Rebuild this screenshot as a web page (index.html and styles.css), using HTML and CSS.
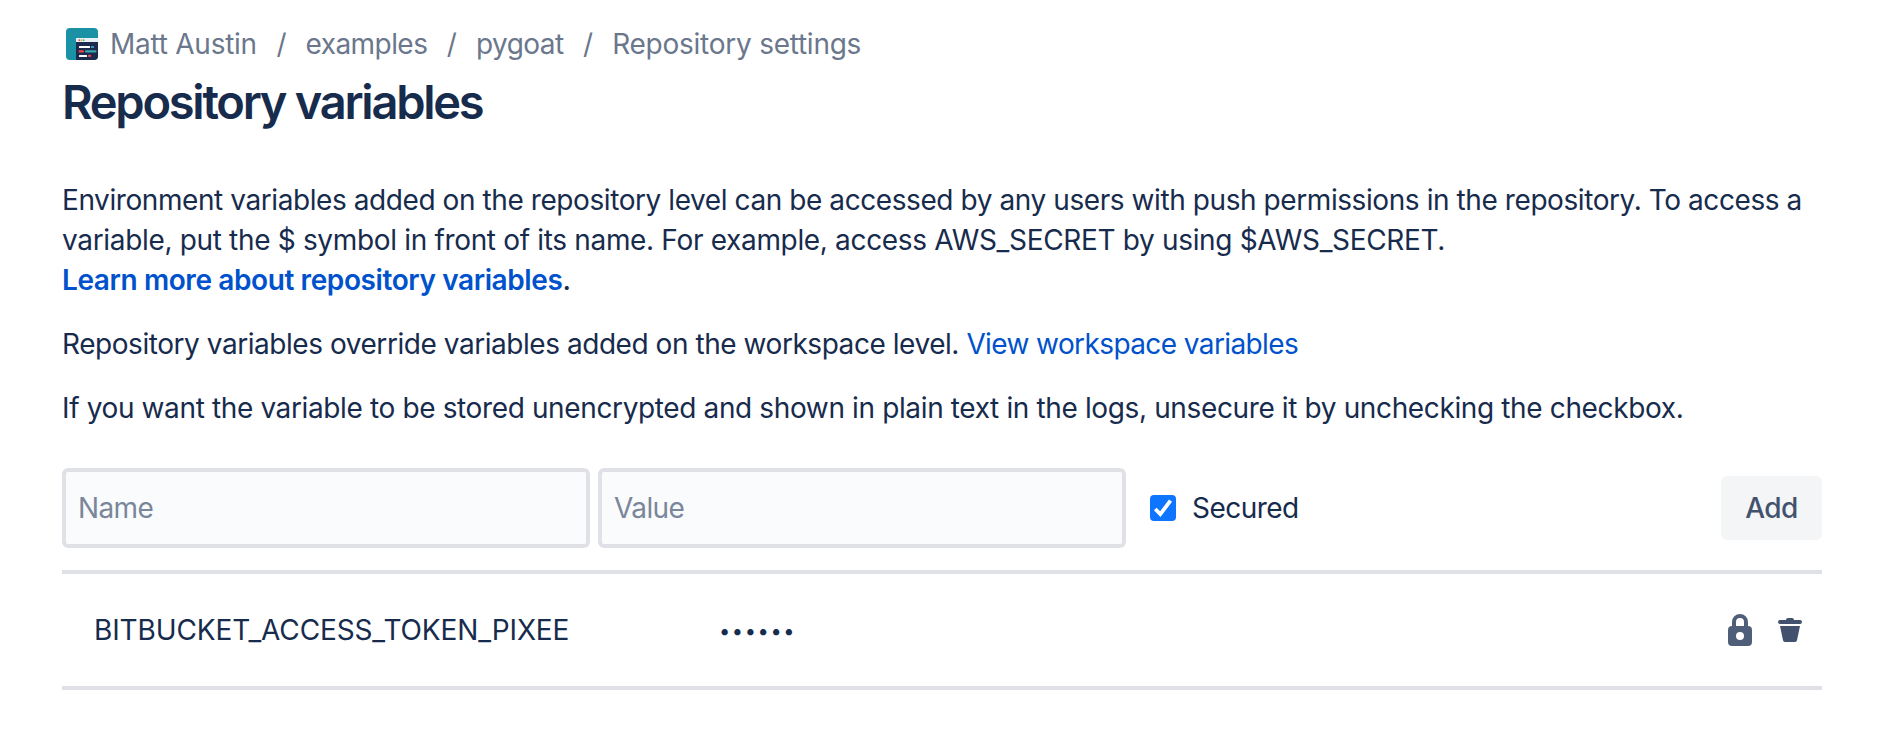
FILE: index.html
```html
<!DOCTYPE html>
<html lang="en">
<head>
<meta charset="utf-8">
<title>Repository variables</title>
<link rel="stylesheet" href="styles.css">
</head>
<body>
<main class="page">
  <nav class="breadcrumbs">
    <svg class="avatar" viewBox="0 0 32 32" aria-hidden="true">
      <defs><clipPath id="round"><rect width="32" height="32" rx="4"/></clipPath></defs>
      <g clip-path="url(#round)">
        <rect width="32" height="32" fill="#1a91a5"/>
        <rect x="10" y="10" width="22" height="22" fill="#1c2b4d"/>
        <rect x="10" y="10" width="22" height="4" fill="#e9f0f5"/>
        <circle cx="13.3" cy="12.2" r=".9" fill="#ef4b4b"/><circle cx="15.5" cy="12.2" r=".9" fill="#f2a33c"/><circle cx="17.7" cy="12.2" r=".9" fill="#2fbf71"/>
        <rect x="13" y="18" width="11" height="2" rx=".6" fill="#fff"/><rect x="25" y="18" width="3" height="2" rx=".6" fill="#3f8fd0"/>
        <rect x="12.5" y="22.3" width="5.5" height="2.2" rx="1" fill="#ee4545"/><rect x="19" y="22.3" width="11.5" height="2.2" rx="1" fill="#36a9ae"/>
        <rect x="13" y="27" width="8" height="2" rx=".6" fill="#fff"/><rect x="22" y="26.8" width="3.2" height="2.2" rx="1" fill="#ee4545"/>
      </g>
    </svg>
    <a class="crumb loose">Matt Austin</a><span class="sep">/</span><a class="crumb">examples</a><span class="sep">/</span><a class="crumb">pygoat</a><span class="sep">/</span><a class="crumb loose">Repository settings</a>
  </nav>
  <h1 class="title">Repository variables</h1>
  <section class="intro">
    <p>Environment variables added on the repository level can be accessed by any users with push permissions in the repository. To access a<br><span class="line-two">variable, put the $ symbol in front of its name. For example, access AWS_SECRET by using $AWS_SECRET.</span><br><a class="link strong">Learn more about repository variables</a><span class="stop">.</span></p>
    <p class="override">Repository variables override variables added on the workspace level. <a class="link workspace">View workspace variables</a></p>
    <p class="hint">If you want the variable to be stored unencrypted and shown in plain text in the logs, unsecure it by unchecking the checkbox.</p>
  </section>
  <form class="add-row">
    <input class="field" type="text" placeholder="Name">
    <input class="field" type="text" placeholder="Value">
    <span class="secured">
      <svg class="checkbox" viewBox="0 0 26 26" aria-hidden="true"><rect width="26" height="26" rx="4" fill="#0d75ff"/><path d="M5.3 14 10.3 19.2 20.5 5.7" fill="none" stroke="#fff" stroke-width="3.8"/></svg>
      <span>Secured</span>
    </span>
    <button class="add" type="button">Add</button>
  </form>
  <div class="variable">
    <span class="name">BITBUCKET_ACCESS_TOKEN_PIXEE</span>
    <span class="value">••••••</span>
    <span class="actions">
      <svg class="lock" viewBox="0 0 24 32" aria-hidden="true"><path d="M6 14V8a6 6 0 0 1 12 0v6" fill="none" stroke="#505f79" stroke-width="4"/><path fill="#505f79" fill-rule="evenodd" d="M4 12h16a4 4 0 0 1 4 4v12a4 4 0 0 1-4 4H4a4 4 0 0 1-4-4V16a4 4 0 0 1 4-4Zm8 6a4 4 0 1 0 0 8 4 4 0 0 0 0-8Z"/></svg>
      <svg class="trash" viewBox="0 0 24 24" aria-hidden="true"><path fill="#42526e" d="M2 2h6a2 2 0 0 1 2-2h4a2 2 0 0 1 2 2h6a2 2 0 0 1 0 4H2a2 2 0 0 1 0-4ZM2 8h20l-3 14.3a2 2 0 0 1-2 1.7H7a2 2 0 0 1-2-1.7Z"/></svg>
    </span>
  </div>
</main>
</body>
</html>
```
FILE: styles.css
```css
* { box-sizing: border-box; }
body {
  margin: 0;
  background: #fff;
  color: #172b4d;
  font: 400 28px/40px Inter, "Liberation Sans", sans-serif;
  letter-spacing: -0.42px;
}
.page { padding: 24px 76px 0 62px; }
.breadcrumbs {
  display: flex;
  align-items: center;
  height: 40px;
  padding-left: 4px;
  color: #6b778c;
}
.avatar { width: 32px; height: 32px; margin-right: 12px; }
.crumb { letter-spacing: -0.55px; }
.crumb.loose { letter-spacing: -0.25px; }
.sep { width: 48.6px; text-align: center; }
.title {
  margin: 10px 0 0;
  font-size: 47px;
  line-height: 56px;
  font-weight: 600;
  letter-spacing: -2.25px;
}
.intro { padding-top: 50px; white-space: nowrap; }
.intro p { margin: 0 0 24px; }
.intro .override { letter-spacing: -0.45px; }
.intro .hint { letter-spacing: -0.37px; }
.line-two { letter-spacing: -0.33px; }
.link { color: #0052cc; }
.intro .workspace { letter-spacing: -0.6px; }
.strong { font-weight: 600; letter-spacing: -0.4px; }
.stop { font-weight: 500; }
.add-row {
  display: flex;
  align-items: center;
  height: 106px;
  margin: 40px 0 0;
  padding-bottom: 22px;
  border-bottom: 4px solid #dfe1e6;
}
.field {
  width: 528px;
  height: 80px;
  margin-right: 8px;
  padding: 0 12px;
  border: 4px solid #dfe1e6;
  border-radius: 6px;
  background: #fafbfc;
  font: inherit;
  letter-spacing: -0.6px;
}
.field::placeholder { color: #7a869a; opacity: 1; }
.secured { display: flex; align-items: center; gap: 16px; margin-left: 16px; }
.checkbox { width: 26px; height: 26px; }
.secured span { letter-spacing: -0.55px; }
.add {
  width: 101px;
  height: 64px;
  margin-left: auto;
  padding: 0;
  border: 0;
  border-radius: 6px;
  background: #f4f5f7;
  color: #42526e;
  font: inherit;
  font-weight: 500;
  letter-spacing: -0.5px;
}
.variable {
  display: flex;
  align-items: center;
  height: 116px;
  padding: 0 20px 0 32px;
  border-bottom: 4px solid #dfe1e6;
}
.name { width: 625px; letter-spacing: -0.13px; }
.value { padding-top: 1px; font-size: 20px; letter-spacing: 1.6px; }
.actions { display: flex; align-items: center; gap: 26px; margin-left: auto; }
.lock { width: 24px; height: 32px; }
.trash { width: 24px; height: 24px; }
```
